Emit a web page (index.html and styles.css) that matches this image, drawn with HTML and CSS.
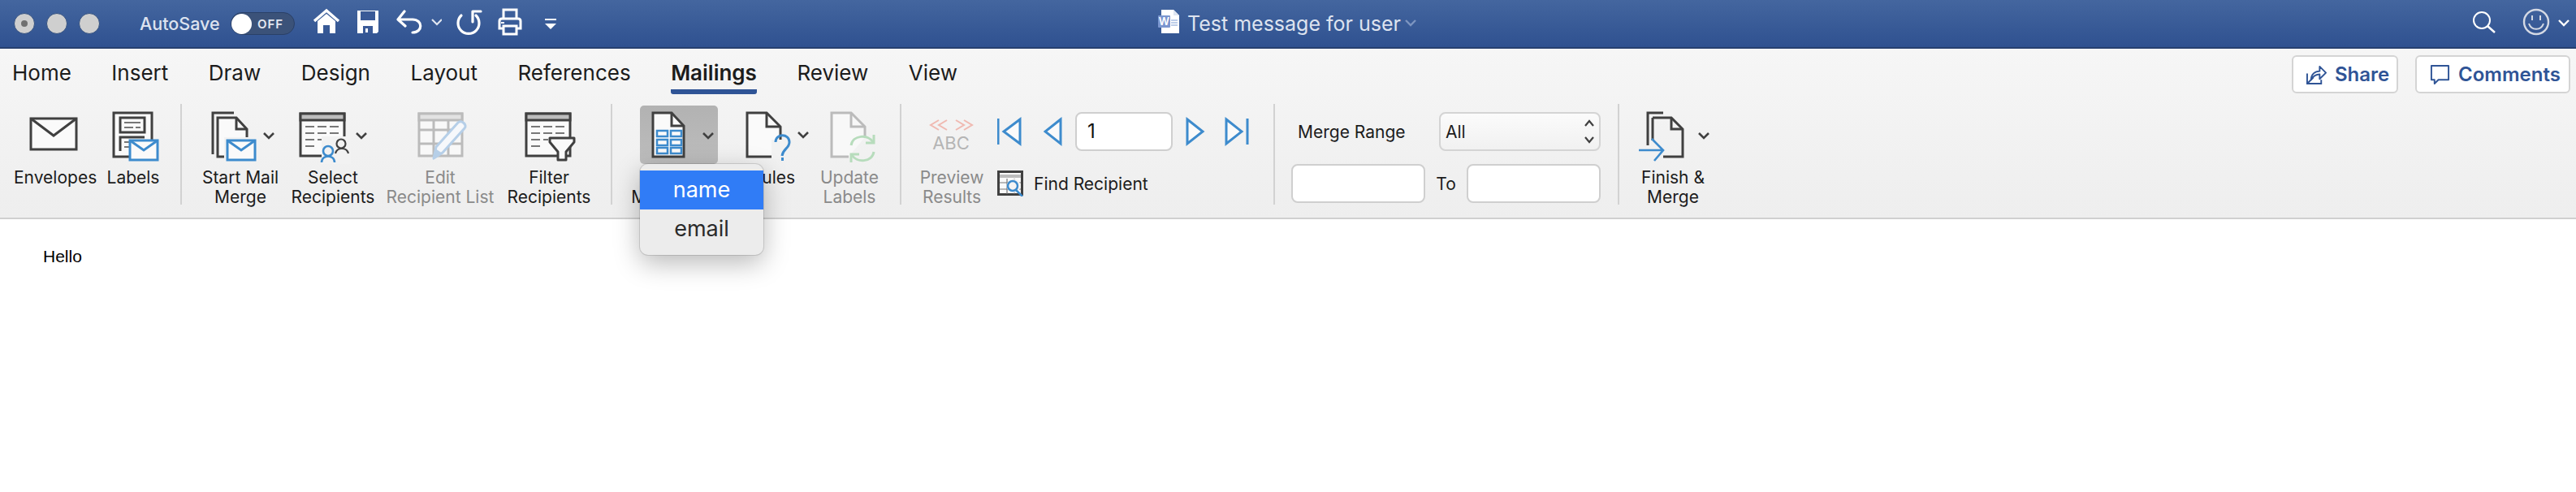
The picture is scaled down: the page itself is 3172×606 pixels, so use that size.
FILE: index.html
```html
<!DOCTYPE html>
<html lang="en">
<head>
<meta charset="utf-8">
<title>Test message for user</title>
<link rel="stylesheet" href="styles.css">
</head>
<body>
<header class="titlebar">
  <div class="lights">
    <span class="light light-dot"></span><span class="light"></span><span class="light"></span>
  </div>
  <span class="autosave">AutoSave</span>
  <span class="toggle"><span class="knob"></span><span class="toggle-text">OFF</span></span>
  <div class="qat">
    <svg class="q-home" viewBox="0 0 34 60"><path d="M1 27 16 14l15 13" fill="none" stroke="#fff" stroke-width="3.4"/><path d="M5 27 16 18l11 9v15H20V32h-8v10H5z" fill="#fff"/></svg>
    <svg class="q-save" viewBox="0 0 32 60"><path d="M2 14h26v26l-2 2H2z" fill="#fff"/><path d="M6 15h18v11H6z" fill="#3a5a97"/><path d="M9 33h12v9H9z" fill="#3a5a97"/><path d="M12 36h3v5h-3z" fill="#fff"/></svg>
    <svg class="q-undo" viewBox="0 0 56 60"><path d="M10 15 2 25l9 8M3 25h17c13 0 13 16 0 16" fill="none" stroke="#fff" stroke-width="3.2" stroke-linecap="round" stroke-linejoin="round"/><path d="m44 25 6 6 6-6" fill="none" stroke="#dfe5f0" stroke-width="2.2"/></svg>
    <svg class="q-redo" viewBox="0 0 32 60"><path d="M6 20a13 13 0 1 0 18 0" fill="none" stroke="#fff" stroke-width="3.2" stroke-linecap="round"/><path d="M20 28V15h10" fill="none" stroke="#fff" stroke-width="3.2" stroke-linecap="round" stroke-linejoin="round"/></svg>
    <svg class="q-print" viewBox="0 0 40 60"><path d="M8 24V13h16v11M8 36H3V27q0-3 3-3h20q3 0 3 3v9h-5M8 33h16v10H8z" fill="none" stroke="#fff" stroke-width="3"/><path d="M5 29h4" stroke="#fff" stroke-width="2"/></svg>
    <svg class="q-more" viewBox="0 0 16 60"><path d="M1 24h14v2H1z" fill="#fff"/><path d="M1 30h14l-7 7z" fill="#fff"/></svg>
  </div>
  <svg class="doc-icon" viewBox="0 0 28 60"><path d="M4 13h15l7 7v22H4z" fill="#fff"/><path d="M19 13v7h7" fill="#dfe6f2"/><path d="M16 26h8M16 29h8M16 32h8" stroke="#7b9bd3" stroke-width="1"/><rect y="20" width="15" height="15" rx="1" fill="#7b96cf"/><text class="doc-w" x="7.500" y="32">W</text></svg>
  <span class="doc-title">Test message for user</span>
  <svg class="title-chev" viewBox="0 0 14 60"><path d="m1 26 6 6 6-6" fill="none" stroke="#7d95c0" stroke-width="2.400"/></svg>
  <div class="title-right">
    <svg class="search" viewBox="0 0 28 60"><circle cx="11" cy="26" r="10" fill="none" stroke="#fff" stroke-width="2"/><path d="m18 33 9 8" stroke="#fff" stroke-width="2.400"/></svg>
    <svg class="smile" viewBox="0 0 34 60"><circle cx="17" cy="28" r="15" fill="none" stroke="#d4d9e4" stroke-width="2.400"/><path d="M12 20v6M22 20v6" stroke="#d4d9e4" stroke-width="2"/><path d="M8 30c3 9 15 9 18 0" fill="none" stroke="#d4d9e4" stroke-width="2"/></svg>
    <svg class="user-chev" viewBox="0 0 14 60"><path d="m1 26 6 6 6-6" fill="none" stroke="#fff" stroke-width="2.400"/></svg>
  </div>
</header>

<section class="ribbon">
  <nav class="tabs">
    <span class="tab">Home</span>
    <span class="tab">Insert</span>
    <span class="tab">Draw</span>
    <span class="tab">Design</span>
    <span class="tab">Layout</span>
    <span class="tab">References</span>
    <span class="tab tab-active">Mailings</span>
    <span class="tab">Review</span>
    <span class="tab">View</span>
    <div class="actions">
      <button class="action action-share">
        <svg class="action-icon" viewBox="0 0 26 26"><path d="M1 12v13h18v-5M1 25l8-8" fill="none" stroke="#2f5496" stroke-width="2"/><path d="M6 20c0-7 5-11 11-11V3l8 8-8 8v-6c-5 0-8 2-11 7z" fill="none" stroke="#2f5496" stroke-width="2" stroke-linejoin="round"/></svg>Share
      </button>
      <button class="action action-comments">
        <svg class="action-icon" viewBox="0 0 26 26"><path d="M2 2h22v18H11l-5 5v-5H2z" fill="none" stroke="#2f5496" stroke-width="2" stroke-linejoin="round"/></svg>Comments
      </button>
    </div>
  </nav>

  <div class="toolbar">
    <div class="tool tool-envelopes">
      <svg class="tool-art" viewBox="0 0 100 72"><rect x="21" y="16" width="56" height="38" fill="#fafafa" stroke="#404040" stroke-width="3"/><path d="m21 16 28 21 28-21" fill="none" stroke="#404040" stroke-width="3"/></svg>
      <span class="tool-label">Envelopes</span>
    </div>
    <div class="tool tool-labels">
      <svg class="tool-art" viewBox="0 0 94 72"><rect x="23" y="9" width="47" height="54" fill="#fafafa" stroke="#404040" stroke-width="3"/><rect x="31" y="15" width="30" height="18" fill="none" stroke="#404040" stroke-width="3"/><path d="M36 21h20M36 27h11M50 27h6" stroke="#777" stroke-width="2"/><path d="M31 56V39h30" fill="none" stroke="#404040" stroke-width="3"/><path d="M36 45h7M36 51h7" stroke="#777" stroke-width="2"/><rect x="43" y="43" width="34" height="24" fill="#fafafa" stroke="#3d8bcd" stroke-width="3"/><path d="m43 43 17 12 17-12" fill="none" stroke="#3d8bcd" stroke-width="3"/></svg>
      <span class="tool-label">Labels</span>
    </div>
    <span class="sep"></span>
    <div class="tool tool-start">
      <svg class="tool-art" viewBox="0 0 112 72"><path d="M48 9H22v51" fill="none" stroke="#404040" stroke-width="3"/><path d="M28 15h23l13 14v34H28z" fill="#fafafa" stroke="#404040" stroke-width="3"/><path d="M51 15v14h13" fill="none" stroke="#404040" stroke-width="3"/><rect x="36" y="39" width="42" height="30" fill="#f2f2f2"/><rect x="40" y="43" width="34" height="24" fill="#fafafa" stroke="#3d8bcd" stroke-width="3"/><path d="m40 43 17 12 17-12" fill="none" stroke="#3d8bcd" stroke-width="3"/><path class="chev" d="m85 34 6 6 6-6"/></svg>
      <span class="tool-label">Start Mail<br>Merge</span>
    </div>
    <div class="tool tool-select">
      <svg class="tool-art" viewBox="0 0 116 72"><rect x="18" y="10" width="54" height="52" fill="#fafafa" stroke="#404040" stroke-width="3"/><rect x="18" y="10" width="54" height="8" fill="#bdbdbd" stroke="#404040" stroke-width="3"/><path d="M24 26h11M39 26h11M54 26h11M24 34h11M39 34h11M54 34h11M24 42h11M39 42h11M24 50h11" stroke="#777" stroke-width="2"/><rect x="44" y="38" width="36" height="34" fill="#f2f2f2"/><circle cx="68" cy="47" r="5.500" fill="none" stroke="#404040" stroke-width="2.200"/><path d="M61 59c2-8 14-8 16 0" fill="none" stroke="#404040" stroke-width="2.200"/><circle cx="52" cy="56" r="6" fill="none" stroke="#3d8bcd" stroke-width="2.600"/><path d="M44 70c0-10 16-10 16 0" fill="none" stroke="#3d8bcd" stroke-width="2.600"/><path class="chev" d="m87 34 6 6 6-6"/></svg>
      <span class="tool-label">Select<br>Recipients</span>
    </div>
    <div class="tool tool-edit">
      <svg class="tool-art" viewBox="0 0 148 72"><rect x="48" y="10" width="53" height="52" fill="#f8f8f8" stroke="#bbb" stroke-width="3"/><rect x="48" y="10" width="53" height="8" fill="#e2e2e2" stroke="#bbb" stroke-width="3"/><path d="M66 18v44M84 18v44M48 30h53M48 47h53" stroke="#bbb" stroke-width="3" fill="none"/><path d="m66 65 3-14 27-30c4-4 12 3 8 7L77 58z" fill="#f6f8fb" stroke="#b6cfe8" stroke-width="3" stroke-linejoin="round"/><path d="m65 67 3-14 9 6z" fill="#b6cfe8"/></svg>
      <span class="tool-label tool-off">Edit<br>Recipient List</span>
    </div>
    <div class="tool tool-filter">
      <svg class="tool-art" viewBox="0 0 120 72"><rect x="32" y="10" width="54" height="52" fill="#fafafa" stroke="#404040" stroke-width="3"/><rect x="32" y="10" width="54" height="8" fill="#bdbdbd" stroke="#404040" stroke-width="3"/><path d="M38 26h11M53 26h11M68 26h11M38 34h11M53 34h11M68 34h11M38 42h11M53 42h6M38 50h11" stroke="#777" stroke-width="2"/><path d="M61 40h30v5L81 57v10H71V57L61 45z" fill="#fafafa" stroke="#404040" stroke-width="3" stroke-linejoin="round"/></svg>
      <span class="tool-label">Filter<br>Recipients</span>
    </div>
    <span class="sep"></span>
    <div class="tool tool-field">
      <svg class="tool-art" viewBox="0 0 132 72"><defs><linearGradient id="pressed" x1="0" y1="0" x2="0" y2="1"><stop offset="0" stop-color="#b2b2b2"/><stop offset="1" stop-color="#bdbdbd"/></linearGradient></defs><rect x="18" width="96" height="72" rx="5" fill="url(#pressed)"/><path d="M34 9h23l15 16v38H34z" fill="#fafafa" stroke="#404040" stroke-width="3"/><path d="M57 9v16h15" fill="none" stroke="#404040" stroke-width="3"/><g fill="none" stroke="#3d8bcd" stroke-width="2.500"><rect x="39" y="31" width="13" height="7"/><rect x="56" y="31" width="13" height="7"/><rect x="39" y="42" width="13" height="7"/><rect x="56" y="42" width="13" height="7"/><rect x="39" y="52" width="13" height="7"/><rect x="56" y="52" width="13" height="7"/></g><path class="chev" d="m96 34 6 6 6-6"/></svg>
      <span class="tool-label">Insert<br>Merge Field</span>
      <div class="menu">
        <div class="menu-item menu-item-on">name</div>
        <div class="menu-item">email</div>
      </div>
    </div>
    <div class="tool tool-rules">
      <svg class="tool-art" viewBox="0 0 100 72"><path d="M51 63H18V9h24l17 17v16" fill="#fafafa" stroke="#404040" stroke-width="3"/><path d="M42 9v17h17" fill="none" stroke="#404040" stroke-width="3"/><rect x="48" y="42" width="16" height="24" fill="#f2f2f2"/><path d="M53 45c0-11 17-11 17 0 0 8-8 8-9 17" fill="none" stroke="#3d8bcd" stroke-width="3"/><path d="M60 64h3v4h-3z" fill="#3d8bcd"/><path class="chev" d="m81 33 6 6 6-6"/></svg>
      <span class="tool-label">Rules</span>
    </div>
    <div class="tool tool-update">
      <svg class="tool-art" viewBox="0 0 88 72"><path d="M43 63H22V9h24l17 17v13" fill="#f8f8f8" stroke="#bbb" stroke-width="3"/><path d="M46 9v17h17" fill="none" stroke="#bbb" stroke-width="3"/><g fill="none" stroke="#b7dcbc" stroke-width="3"><path d="M46 49c2-13 21-14 27-4"/><path d="M74 36v10H64"/><path d="M74 57c-2 13-21 14-27 4"/><path d="M46 70V60h10"/></g></svg>
      <span class="tool-label tool-off">Update<br>Labels</span>
    </div>
    <span class="sep"></span>
    <div class="tool tool-preview">
      <svg class="tool-art" viewBox="0 0 92 72"><path d="m29 18-10 6 10 6M39 18l-10 6 10 6M50 18l10 6-10 6M60 18l10 6-10 6" transform="translate(1 0)" fill="none" stroke="#f0b9b1" stroke-width="2"/><text class="abc" x="45" y="54">ABC</text></svg>
      <span class="tool-label tool-off">Preview<br>Results</span>
    </div>
    <div class="nav-group">
      <div class="nav-row">
        <svg class="nav-first" viewBox="0 0 41 48"><path d="M1 8v32" stroke="#3d8bcd" stroke-width="3"/><path d="M28 9 8 24l20 15z" fill="#fafafa" stroke="#3d8bcd" stroke-width="3"/></svg>
        <svg class="nav-prev" viewBox="0 0 23 48"><path d="M21 9 2 24l19 15z" fill="#fafafa" stroke="#3d8bcd" stroke-width="3"/></svg>
        <span class="field field-record">1</span>
        <svg class="nav-next" viewBox="0 0 32 48"><path d="M2 9l19 15L2 39z" fill="#fafafa" stroke="#3d8bcd" stroke-width="3"/></svg>
        <svg class="nav-last" viewBox="0 0 30 48"><path d="M2 9l19 15L2 39z" fill="#fafafa" stroke="#3d8bcd" stroke-width="3"/><path d="M28 8v32" stroke="#3d8bcd" stroke-width="3"/></svg>
      </div>
      <div class="find-row">
        <svg class="find-icon" viewBox="0 0 32 32"><rect x="1.500" y="1.500" width="29" height="28" fill="#fafafa" stroke="#404040" stroke-width="3"/><path d="M3 7h26" stroke="#bdbdbd" stroke-width="4"/><path d="M3 15h26M3 23h26M12 10v19M21 10v19" stroke="#777" stroke-width="1.200"/><circle cx="20" cy="19" r="8.500" fill="#f4f4f4"/><circle cx="19" cy="19" r="6" fill="none" stroke="#3d8bcd" stroke-width="2.500"/><path d="m23 24 8 8" stroke="#3d8bcd" stroke-width="2.500"/></svg>
        <span class="find-text">Find Recipient</span>
      </div>
    </div>
    <span class="sep sep-merge"></span>
    <div class="range">
      <div class="range-row">
        <span class="range-label">Merge Range</span>
        <span class="select">All<svg class="select-arrows" viewBox="0 0 12 36"><path d="m1 11 5-6 5 6M1 25l5 6 5-6" fill="none" stroke="#404040" stroke-width="2.200"/></svg></span>
      </div>
      <div class="range-row range-row-low">
        <span class="field field-range"></span>
        <span class="range-to">To</span>
        <span class="field field-range"></span>
      </div>
    </div>
    <span class="sep"></span>
    <div class="tool tool-finish">
      <svg class="tool-art" viewBox="0 0 100 72"><path d="M38 9H19v40" fill="none" stroke="#404040" stroke-width="3"/><path d="M25 15h23l14 14v34H38" fill="none" stroke="#404040" stroke-width="3"/><path d="M25 15v28" stroke="#404040" stroke-width="3"/><path d="M48 15v14h14" fill="none" stroke="#404040" stroke-width="3"/><path d="M8 55h30M24 41l14 14-11 13" fill="none" stroke="#3d8bcd" stroke-width="2.600"/><path class="chev" d="m82 34 6 6 6-6"/></svg>
      <span class="tool-label">Finish &amp;<br>Merge</span>
    </div>
  </div>
</section>

<main class="document">
  <p class="para">Hello</p>
</main>
</body>
</html>
```

FILE: styles.css
```css
* { box-sizing: border-box; }

html, body {
  margin: 0;
  height: 606px;
  overflow: hidden;
  background: #fff;
  font-family: Inter, "Liberation Sans", sans-serif;
  color: #1c1c1c;
}

svg { display: block; flex: none; }

/* Title bar */
.titlebar {
  display: flex;
  align-items: center;
  height: 60px;
  padding-left: 17px;
  background: linear-gradient(#44669f, #2f5190);
  border-bottom: 2px solid #27406f;
}

.lights { display: flex; gap: 14px; }

.light {
  position: relative;
  width: 26px;
  height: 26px;
  border-radius: 50%;
  background: #cfcfcf;
  border: 1px solid #33507f;
}

.light-dot::after {
  content: "";
  position: absolute;
  inset: 8px;
  border-radius: 50%;
  background: #707070;
}

.autosave {
  margin-left: 49px;
  width: 100px;
  font-size: 21.5px;
  font-weight: 500;
  color: #dde3ef;
  white-space: nowrap;
}

.toggle {
  display: flex;
  align-items: center;
  margin-left: 12px;
  width: 79px;
  height: 28px;
  border-radius: 14px;
  background: #3b5279;
  border: 1px solid #2a4067;
}

.knob {
  width: 25px;
  height: 25px;
  border-radius: 50%;
  background: #fff;
}

.toggle-text {
  margin-left: 7px;
  font-size: 15px;
  font-weight: 600;
  letter-spacing: 1px;
  color: #e3e7f0;
}

.qat { display: flex; gap: 18px; margin-left: 23px; }
.qat svg { height: 60px; }
.q-home { width: 34px; }
.q-save { width: 32px; }
.q-undo { width: 56px; }
.q-redo { width: 32px; }
.q-print { width: 40px; }
.q-more { width: 16px; }

.doc-icon { width: 28px; height: 60px; margin-left: 740px; }
.doc-w { font-size: 13px; font-weight: 600; fill: #fff; text-anchor: middle; }

.doc-title {
  margin-left: 8px;
  font-size: 25px;
  color: #dde3ef;
  white-space: nowrap;
}

.title-chev { width: 14px; height: 60px; margin-left: 5px; }

.title-right { display: flex; margin-left: auto; padding-right: 8px; }
.search { width: 28px; height: 60px; margin-right: 33px; }
.smile { width: 34px; height: 60px; margin-right: 10px; }
.user-chev { width: 14px; height: 60px; }

/* Ribbon */
.ribbon {
  height: 210px;
  background: linear-gradient(#f6f6f6, #eeeeee);
  border-bottom: 2px solid #d0d0d0;
}

.tabs {
  display: flex;
  align-items: flex-start;
  gap: 49.5px;
  height: 68px;
  padding-left: 15px;
}

.tab {
  margin-top: 12px;
  font-size: 26px;
  line-height: 36px;
  white-space: nowrap;
}

.tab-active {
  padding-bottom: 2px;
  font-weight: 600;
  border-bottom: 6px solid #2f5496;
  border-radius: 0 0 3px 3px;
}

.actions {
  display: flex;
  gap: 21px;
  margin-left: auto;
  margin-top: 8px;
  padding-right: 7px;
}

.action {
  display: flex;
  align-items: center;
  height: 47px;
  gap: 10px;
  padding: 0 0 0 16px;
  background: #fff;
  border: 2px solid #d4d4d4;
  border-radius: 6px;
  font-family: inherit;
  font-size: 24px;
  font-weight: 600;
  color: #2f5496;
}

.action-share { width: 131px; }
.action-comments { width: 191px; }
.action-icon { width: 25px; height: 25px; }

.toolbar {
  position: relative;
  display: flex;
  align-items: flex-start;
  height: 124px;
  padding: 2px 0 0 17px;
}

.tool {
  position: relative;
  flex: none;
  text-align: center;
}

.tool-art { width: 100%; height: 72px; }
.chev { fill: none; stroke: #404040; stroke-width: 2.600; }

.tool-label {
  display: block;
  margin-top: 5px;
  font-size: 21px;
  line-height: 24px;
  white-space: nowrap;
}

.tool-off { color: #8a8a8a; }

.tool-envelopes { width: 100px; }
.tool-labels { width: 94px; }
.tool-start { width: 112px; }
.tool-select { width: 116px; }
.tool-edit { width: 148px; }
.tool-filter { width: 120px; }
.tool-field { width: 132px; }
.tool-rules { width: 100px; }
.tool-update { width: 88px; }
.tool-preview { width: 92px; }
.tool-finish { width: 100px; }

.sep {
  flex: none;
  width: 2px;
  height: 124px;
  margin: -2px 16px 0;
  background: #d2d2d2;
}

.tool-labels + .sep { margin-left: 11px; }
.tool-update + .sep { margin-right: 16px; margin-left: 18px; }
.sep-merge { margin: -2px 20px 0 30px; }
.range + .sep { margin-left: 21px; }

.abc { font-size: 22px; fill: #b5b5b5; text-anchor: middle; }

/* Pop-up menu */
.menu {
  position: absolute;
  z-index: 5;
  left: 18px;
  top: 72px;
  width: 152px;
  height: 112px;
  padding: 8px 0;
  background: #ececec;
  border-radius: 10px;
  box-shadow: 0 0 0 1px rgba(0, 0, 0, .12), 0 10px 32px rgba(0, 0, 0, .28);
}

.menu-item {
  height: 48px;
  font-size: 27px;
  line-height: 48px;
  color: #2b2b2b;
}

.menu-item-on { background: #307cf6; color: #fff; }

/* Record navigation */
.nav-group { flex: none; width: 310px; margin: 8px 0 0 10px; }

.nav-row { display: flex; gap: 16px; height: 48px; }
.nav-row svg { height: 48px; }
.nav-first { width: 41px; }
.nav-prev { width: 23px; }
.nav-next { width: 32px; }
.nav-last { width: 30px; }

.field {
  display: block;
  flex: none;
  height: 48px;
  background: #fff;
  border: 2px solid #cfcfcf;
  border-radius: 8px;
  font-size: 24px;
  line-height: 44px;
}

.field-record { width: 120px; padding-left: 13px; color: #111; }
.field-range { width: 165px; }

.find-row {
  display: flex;
  align-items: center;
  gap: 13px;
  margin-top: 24px;
  height: 32px;
}

.find-icon { width: 32px; height: 32px; }
.find-text { font-size: 21px; white-space: nowrap; }

/* Merge range */
.range { flex: none; width: 381px; margin-top: 8px; }

.range-row {
  display: flex;
  align-items: center;
  justify-content: space-between;
  height: 48px;
  padding-left: 8px;
}

.range-label { font-size: 21px; white-space: nowrap; }

.select {
  display: flex;
  align-items: center;
  justify-content: space-between;
  width: 199px;
  height: 48px;
  padding: 0 6px 0 6px;
  background: linear-gradient(#fbfbfb, #f1f1f1);
  border: 2px solid #d4d4d4;
  border-radius: 8px;
  font-size: 21px;
}

.select-arrows { width: 12px; height: 36px; }

.range-row-low { margin-top: 16px; padding-left: 0; }
.range-to { font-size: 21px; }

/* Document */
.document { padding: 34px 0 0 53px; }

.para {
  margin: 0;
  font-family: "Liberation Sans", Arial, sans-serif;
  font-size: 21px;
  line-height: 24px;
  color: #000;
}
```
